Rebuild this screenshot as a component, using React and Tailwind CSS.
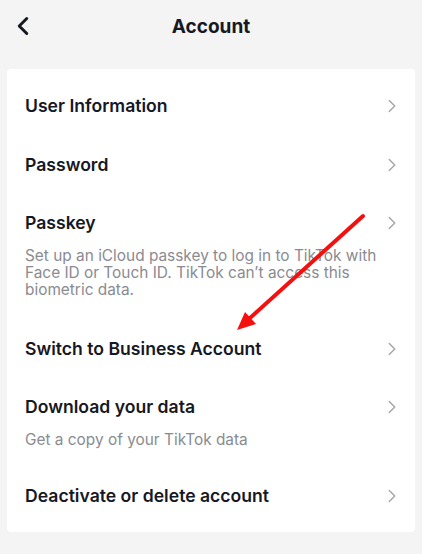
import { ChevronLeft, ChevronRight } from 'lucide-react';

const rows = [
  { title: 'User Information' },
  { title: 'Password' },
  {
    title: 'Passkey',
    desc: 'Set up an iCloud passkey to log in to TikTok with Face ID or Touch ID. TikTok can’t access this biometric data.',
    pad: 'pb-[21px]',
  },
  { title: 'Switch to Business Account' },
  { title: 'Download your data', desc: 'Get a copy of your TikTok data', pad: 'pb-[18px]' },
  { title: 'Deactivate or delete account' },
];

function Chevron() {
  return <ChevronRight size={22} strokeWidth={1.5} className="shrink-0 text-[#a4a4a8]" />;
}

function Row({ title, desc, pad }) {
  if (!desc) {
    return (
      <div className="flex h-[59px] items-center justify-between pl-[18px] pr-[12px]">
        <span className="text-[17.6px] font-semibold leading-[24px] text-[#161823]">{title}</span>
        <Chevron />
      </div>
    );
  }
  return (
    <div className={`pl-[18px] pr-[12px] pt-[17px] ${pad}`}>
      <div className="flex items-center justify-between">
        <span className="text-[17.6px] font-semibold leading-[24px] text-[#161823]">{title}</span>
        <Chevron />
      </div>
      <p className="mt-[12px] pr-[14px] text-[15.4px] leading-[17px] text-[#8a8b91]">{desc}</p>
    </div>
  );
}

export default function App() {
  return (
    <div className="relative h-[554px] w-[422px] overflow-hidden bg-[#f4f4f4] font-['Inter',sans-serif]">
      {/* Header */}
      <div className="relative flex h-[69px] items-start justify-center pt-[13px]">
        <ChevronLeft size={30} strokeWidth={2.4} className="absolute left-[8px] top-[11px] text-[#161823]" />
        <h1 className="text-[19px] font-bold leading-[28px] text-[#161823]">Account</h1>
      </div>

      {/* Card */}
      <div className="mx-[7px] rounded-[4px] bg-white pb-[7px] pt-[7px]">
        {rows.map((r) => (
          <Row key={r.title} {...r} />
        ))}
      </div>

      {/* Annotation arrow */}
      <svg className="pointer-events-none absolute left-0 top-0" width="422" height="554">
        <line x1="363" y1="216" x2="250" y2="318" stroke="#f51010" strokeWidth="4" strokeLinecap="round" />
        <polygon points="237,330 256,324 245,312" fill="#f51010" />
      </svg>
    </div>
  );
}
